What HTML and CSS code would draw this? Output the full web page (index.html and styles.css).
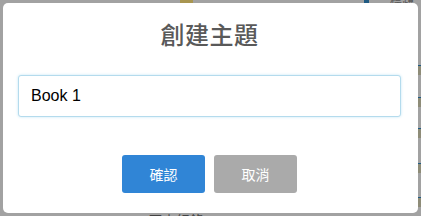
FILE: index.html
```html
<!DOCTYPE html>
<html lang="zh-Hant">
<head>
<meta charset="UTF-8">
<meta name="viewport" content="width=device-width,initial-scale=1">
<title>創建主題</title>
<link rel="stylesheet" href="styles.css">
</head>
<body>
<div class="page">
  <div class="behind">
    <span class="bit bit-yellow"></span>
    <span class="bit bit-blue"></span>
    <span class="bit bit-text">標題</span>
    <span class="bit bit-row r1"></span>
    <span class="bit bit-row r2"></span>
    <span class="bit bit-row r3"></span>
    <span class="bit bit-row r4"></span>
    <span class="bit bit-row r5"></span>
    <span class="bit bit-bottom">歷史紀錄</span>
  </div>
  <div class="popup">
    <h2 class="popup-title">創建主題</h2>
    <input class="popup-input" type="text" value="Book 1">
    <div class="popup-actions">
      <button class="btn btn-confirm">確認</button>
      <button class="btn btn-cancel">取消</button>
    </div>
  </div>
</div>
</body>
</html>
```

FILE: styles.css
```css
:root {
  --overlay: #a2a2a2;
  --confirm: #3085d6;
  --cancel: #aaaaaa;
  --title: #595959;
}
body { margin: 0; background: var(--overlay); font-family: 'Liberation Sans', 'Noto Sans CJK TC', sans-serif; }
.page { position: relative; width: 421px; height: 216px; overflow: hidden; padding: 3px 0 0 3px; box-sizing: border-box; }

/* page behind the overlay, only a few edges show */
.behind .bit { position: absolute; display: block; }
.bit-yellow { left: 180px; top: 0; width: 13px; height: 3px; background: #a89550; }
.bit-blue { left: 364px; top: 0; width: 5px; height: 3px; background: #1f5a82; }
.bit-text { left: 390px; top: -9px; font-size: 12px; color: #555; }
.bit-row { left: 418px; width: 3px; height: 10px; border-top: 1px solid #1f5a82; box-sizing: border-box; background: #8e8c78; }
.r1 { top: 65px; } .r2 { top: 97px; } .r3 { top: 128px; } .r4 { top: 163px; } .r5 { top: 197px; }
.bit-bottom { left: 148px; top: 210px; font-size: 14px; color: #444; font-family: 'Noto Sans CJK TC', sans-serif; }

.popup {
  position: relative;
  width: 415px; height: 210px;
  background: #fff;
  border-radius: 5px;
  padding: 14px 17px 0 15px;
  box-sizing: border-box;
  display: flex; flex-direction: column; align-items: center;
}
.popup-title {
  margin: 0;
  font-family: 'Noto Sans CJK TC', sans-serif;
  font-size: 24px; line-height: 34px; font-weight: 500;
  color: var(--title);
  letter-spacing: 0.02em;
}
.popup-input {
  margin-top: 24px;
  width: 383px; height: 42px;
  box-sizing: border-box;
  border: 1px solid #b4dbed;
  border-radius: 3px;
  box-shadow: 0 0 3px #c4e6f5;
  padding: 0 12px;
  font-family: 'Liberation Sans', sans-serif;
  font-size: 16px; color: #000;
  outline: none;
}
.popup-actions { margin-top: 38px; display: flex; gap: 9px; }
.btn {
  width: 83px; height: 38px;
  border: 0; border-radius: 3px;
  color: #fff;
  font-family: 'Noto Sans CJK TC', sans-serif;
  font-size: 14px;
  padding: 0;
}
.btn-confirm { background: var(--confirm); }
.btn-cancel { background: var(--cancel); }
```
